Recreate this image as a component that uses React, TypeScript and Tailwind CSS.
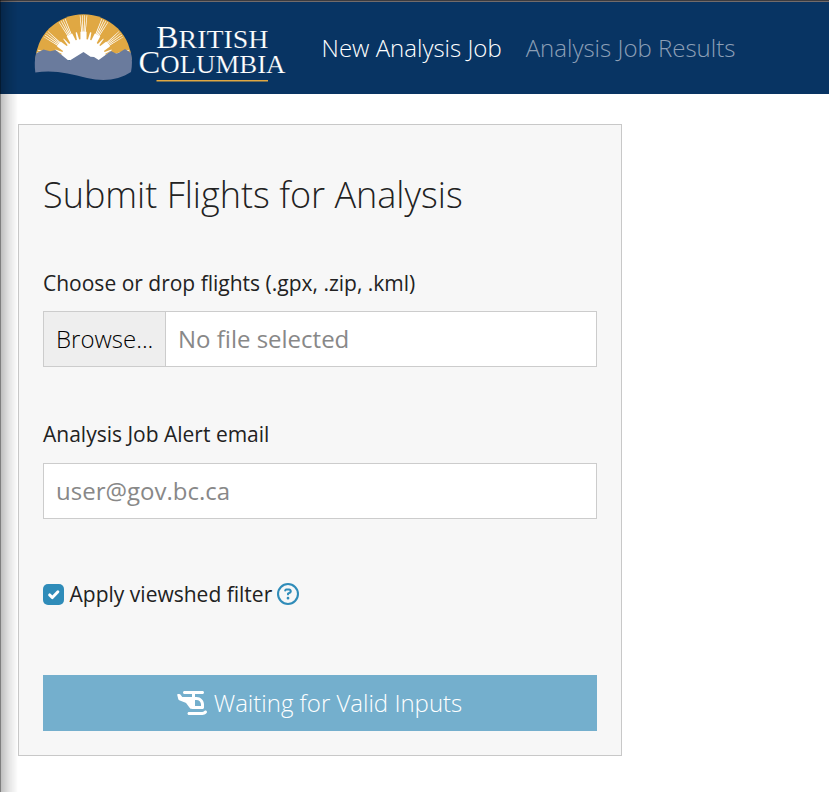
import React from "react";
import { FaHelicopter, FaRegCircleQuestion } from "react-icons/fa6";

const CX = 83.5;
const CY = 62.5;

function polar(radius: number, degrees: number) {
  const a = (degrees * Math.PI) / 180;
  return `${(CX + radius * Math.sin(a)).toFixed(2)},${(CY - radius * Math.cos(a)).toFixed(2)}`;
}

const bundles = [-79, -53, -27, 0, 27, 53, 79];
const spikes = [-70, -62, -44, -36, -18, -9, 9, 18, 36, 44, 62, 70];

function Logo() {
  return (
    <svg width="260" height="80" viewBox="30 10 260 80" className="block" aria-label="British Columbia">
      <clipPath id="sky">
        <rect x="30" y="10" width="110" height="50" />
      </clipPath>
      <g clipPath="url(#sky)">
        <circle cx={CX} cy={CY} r="48.3" fill="#e0a843" />
        <circle cx={CX} cy={CY} r="31" fill="#fff" />
        {bundles.map((b) =>
          [-4.2, -1.4, 1.4, 4.2].map((d) => (
            <polygon
              key={`${b}${d}`}
              points={`${polar(30, b + d * 0.8 - 0.9)} ${polar(47.3, b + d - 0.35)} ${polar(47.3, b + d + 0.35)} ${polar(30, b + d * 0.8 + 0.9)}`}
              fill="#fff"
            />
          )),
        )}
        {spikes.map((s) => (
          <polygon key={s} points={`${polar(36, s - 4)} ${polar(23.5, s - 1.6)} ${polar(23.5, s + 1.6)} ${polar(36, s + 4)}`} fill="#e0a843" />
        ))}
      </g>
      <path d="M55 50 69 61 83.5 52 99 60 111 51V65H55Z" fill="#fff" />
      <path
        d="M36 53.5 43.5 49.5 50 51.3 55.5 50 69 61 83.5 52 90.5 56.7 94 57 98.7 60 111 51 116 53.6 118.5 53 125 49 131 53C132.3 59 132.3 66 131 72 119 80 104 82 87 78 69 73.5 54 69.5 35.3 72.5 34.5 66 34.5 59 36 53.5Z"
        fill="#6a7b9d"
      />
      <g fill="#fff" stroke="#083463" strokeWidth="0.2" fontFamily="'Liberation Serif', serif">
        <text x="156" y="48" fontSize="25.5" textLength="112.5" lengthAdjust="spacingAndGlyphs">
          <tspan fontSize="31">B</tspan>RITISH
        </text>
        <text x="138.5" y="72.7" fontSize="25.5" textLength="147" lengthAdjust="spacingAndGlyphs">
          <tspan fontSize="31">C</tspan>OLUMBIA
        </text>
      </g>
      <rect x="156.5" y="80" width="111.5" height="1.5" fill="#e0a843" />
    </svg>
  );
}

export default function App() {
  return (
    <div className="relative h-[792px] w-[829px] overflow-hidden bg-white font-['Open_Sans',sans-serif] text-[#222]">
      <header className="flex h-[94px] items-start border-t border-[#3b3b40] bg-[#083463]">
        <div className="flex h-[93px] w-full items-start border-t border-[#726b6b] pl-[30px] pt-2">
          <Logo />
          <nav className="ml-[31.6px] flex gap-6 pt-[20px] text-[24px] font-light leading-[36px] whitespace-nowrap">
            <a className="text-white">New Analysis Job</a>
            <a className="text-[#8c9fb6]">Analysis Job Results</a>
          </nav>
        </div>
      </header>
      <main className="ml-[18px] mt-[30px] flex h-[632px] w-[604px] flex-col border border-[#c8c8c8] bg-[#f7f7f7] px-6 whitespace-nowrap">
        <h1 className="mt-[45px] text-[36px] font-light leading-[50px]">Submit Flights for Analysis</h1>
        <label className="mt-[47px] text-[21px] leading-[32px]">Choose or drop flights (.gpx, .zip, .kml)</label>
        <div className="mt-3 flex h-14 shrink-0 border border-[#ccc] bg-white text-[24px] leading-[54px]">
          <span className="w-[122px] border-r border-[#ccc] bg-[#eee] pl-3 font-light text-black">Browse...</span>
          <span className="pl-3 text-[#888]">No file selected</span>
        </div>
        <label className="mt-[51px] text-[21px] leading-[32px]">Analysis Job Alert email</label>
        <div className="mt-[13px] h-14 shrink-0 border border-[#ccc] bg-white pl-3 text-[24px] leading-[54px] text-[#888]">user@gov.bc.ca</div>
        <div className="mt-[59px] flex h-8 items-center text-[21px] leading-[32px]">
          <span className="flex size-[21px] items-center justify-center rounded-[5px] bg-[#2f8cb9]">
            <svg width="21" height="21" viewBox="0 0 21 21" fill="none" stroke="#fff" strokeWidth="2.9" strokeLinecap="round" strokeLinejoin="round">
              <path d="m6.6 10.9 2.8 2.7 5.5-5.8" />
            </svg>
          </span>
          <span className="ml-[5.6px]">Apply viewshed filter</span>
          <FaRegCircleQuestion className="ml-[5px] size-[22px] text-[#2f8cb9]" />
        </div>
        <button className="mt-[65px] flex h-14 shrink-0 items-center justify-center bg-[#74afcd] text-[24px] font-light text-white">
          <FaHelicopter className="-ml-px mr-[7px] h-6 w-[30px]" />
          <span>Waiting for Valid Inputs</span>
        </button>
      </main>
      <div className="pointer-events-none absolute inset-y-0 left-0 w-[18px] border-l border-black/50 bg-linear-to-r from-black/25 via-black/10 to-transparent" />
    </div>
  );
}
